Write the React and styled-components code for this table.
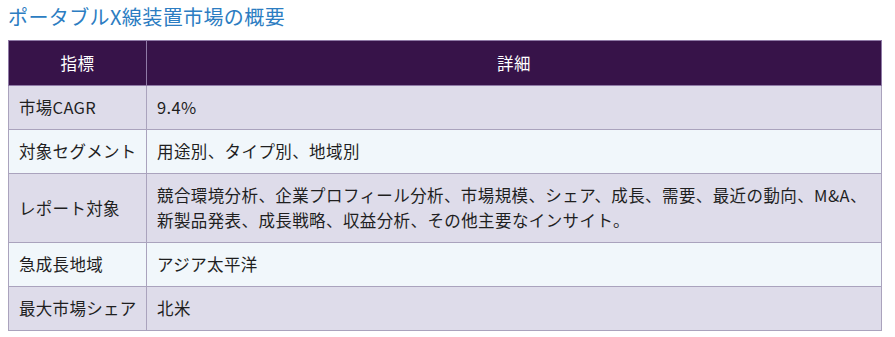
import React from 'react';
import styled, { createGlobalStyle } from 'styled-components';

const GlobalStyle = createGlobalStyle`
  body {
    margin: 0;
    padding: 0 8px;
    background: #ffffff;
    font-family: "Noto Sans CJK JP", "Noto Sans", sans-serif;
    color: #1f1f1f;
  }
`;

const Title = styled.h2`
  margin: 0;
  padding-top: 2px;
  font-size: 20px;
  line-height: 30px;
  font-weight: 400;
  letter-spacing: 0.4px;
  color: #2c7dc2;
`;

const Table = styled.table`
  margin-top: 8px;
  width: 874px;
  table-layout: fixed;
  border-collapse: collapse;
  border: 1px solid #aaa3bd;
  font-size: 16.5px;
  line-height: 25px;
  letter-spacing: 0.4px;
`;

const HeadCell = styled.th`
  height: 44px;
  padding: 0 10px;
  background: #371349;
  color: #ffffff;
  font-weight: 400;
  text-align: center;
  border: 1px solid #8f7aa6;
  width: ${({ $width }) => $width || 'auto'};
`;

const Row = styled.tr`
  background: ${({ $odd }) => ($odd ? '#dedcea' : '#f1f7fb')};
`;

const Cell = styled.td`
  padding: 9px 10px;
  border: 1px solid #aaa3bd;
  vertical-align: middle;
  text-align: left;
  white-space: ${({ $label }) => ($label ? 'nowrap' : 'normal')};
  letter-spacing: ${({ $label }) => ($label ? '0.3px' : 'inherit')};
`;

const rows = [
  ['市場CAGR', '9.4%'],
  ['対象セグメント', '用途別、タイプ別、地域別'],
  [
    'レポート対象',
    '競合環境分析、企業プロフィール分析、市場規模、シェア、成長、需要、最近の動向、M&A、新製品発表、成長戦略、収益分析、その他主要なインサイト。',
  ],
  ['急成長地域', 'アジア太平洋'],
  ['最大市場シェア', '北米'],
];

function App() {
  return (
    <>
      <GlobalStyle />
      <Title>ポータブルX線装置市場の概要</Title>
      <Table>
        <thead>
          <tr>
            <HeadCell $width="117px">指標</HeadCell>
            <HeadCell>詳細</HeadCell>
          </tr>
        </thead>
        <tbody>
          {rows.map(([label, value], i) => (
            <Row key={label} $odd={i % 2 === 0}>
              <Cell $label>{label}</Cell>
              <Cell>{value}</Cell>
            </Row>
          ))}
        </tbody>
      </Table>
    </>
  );
}

export default App;
